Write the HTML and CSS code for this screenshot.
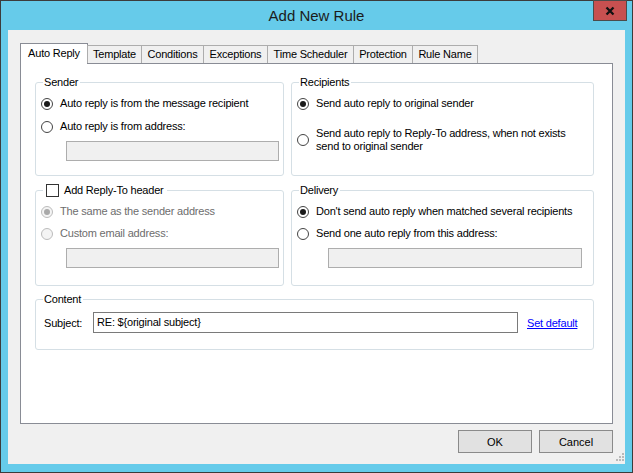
FILE: index.html
```html
<!DOCTYPE html>
<html>
<head>
<meta charset="utf-8">
<title>Add New Rule</title>
<link rel="stylesheet" href="styles.css">
</head>
<body>
<div class="window">
  <div class="titlebar">
    <span class="title">Add New Rule</span>
    <div class="close">
      <svg width="10" height="10" viewBox="0 0 10 10"><path d="M1.5 1.5 L8.5 8.5 M8.5 1.5 L1.5 8.5" stroke="#111" stroke-width="2.3" fill="none"/></svg>
    </div>
  </div>
  <div class="client">
    <div class="tabstrip">
      <div class="tab active w1">Auto Reply</div>
      <div class="tab w2">Template</div>
      <div class="tab w3">Conditions</div>
      <div class="tab w4">Exceptions</div>
      <div class="tab w5">Time Scheduler</div>
      <div class="tab w6">Protection</div>
      <div class="tab w7">Rule Name</div>
    </div>
    <div class="panel">
      <fieldset class="group">
        <legend>Sender</legend>
        <div class="opt first"><span class="radio on"></span><span>Auto reply is from the message recipient</span></div>
        <div class="opt next"><span class="radio"></span><span>Auto reply is from address:</span></div>
        <div class="tb left-tb"></div>
      </fieldset>
      <fieldset class="group">
        <legend>Recipients</legend>
        <div class="opt first"><span class="radio on"></span><span>Send auto reply to original sender</span></div>
        <div class="opt tall"><span class="radio"></span><span class="two">Send auto reply to Reply-To address, when not exists<br>send to original sender</span></div>
      </fieldset>
      <fieldset class="group">
        <legend class="check-legend"><span class="checkbox"></span><span>Add Reply-To header</span></legend>
        <div class="opt first disabled"><span class="radio on"></span><span>The same as the sender address</span></div>
        <div class="opt next2 disabled"><span class="radio"></span><span>Custom email address:</span></div>
        <div class="tb left-tb"></div>
      </fieldset>
      <fieldset class="group">
        <legend>Delivery</legend>
        <div class="opt first"><span class="radio on"></span><span>Don't send auto reply when matched several recipients</span></div>
        <div class="opt next2"><span class="radio"></span><span>Send one auto reply from this address:</span></div>
        <div class="tb right-tb"></div>
      </fieldset>
      <fieldset class="group content">
        <legend>Content</legend>
        <div class="subject-row">
          <span class="subject-label">Subject:</span>
          <div class="subject-tb">RE: ${original subject}</div>
          <span class="link">Set default</span>
        </div>
      </fieldset>
    </div>
    <div class="buttons">
      <div class="btn">OK</div>
      <div class="btn">Cancel</div>
    </div>
    <svg class="grip" width="10" height="10" viewBox="0 0 10 10">
      <rect x="8" y="0" width="2" height="2" fill="#b9b9b9"/>
      <rect x="5" y="3" width="2" height="2" fill="#b9b9b9"/>
      <rect x="8" y="3" width="2" height="2" fill="#b9b9b9"/>
      <rect x="2" y="6" width="2" height="2" fill="#b9b9b9"/>
      <rect x="5" y="6" width="2" height="2" fill="#b9b9b9"/>
      <rect x="8" y="6" width="2" height="2" fill="#b9b9b9"/>
    </svg>
  </div>
</div>
</body>
</html>
```

FILE: styles.css
```css
html, body {
  margin: 0;
  padding: 0;
  background: #ffffff;
}
body {
  font-family: "Liberation Sans", Arial, sans-serif;
  font-size: 11px;
  letter-spacing: -0.2px;
  color: #000;
}
.window {
  width: 633px;
  height: 473px;
  box-sizing: border-box;
  border: 1px solid #3c3c3c;
  background: #66cbea;
  padding: 0 7px 8px;
  display: flex;
  flex-direction: column;
}
.titlebar {
  height: 29px;
  flex: none;
  display: grid;
  grid-template-columns: 1fr auto 1fr;
}
.title {
  grid-column: 2;
  font-size: 15px;
  letter-spacing: 0;
  line-height: 29px;
  color: #1b1b1b;
}
.close {
  grid-column: 3;
  justify-self: end;
  align-self: start;
  width: 34px;
  height: 21px;
  box-sizing: border-box;
  margin-top: -1px;
  margin-right: -2px;
  background: #c75050;
  border: 1px solid #4b4b4b;
  display: flex;
  align-items: center;
  justify-content: center;
  padding-top: 1px;
}
.client {
  position: relative;
  flex: 1;
  background: #f0f0f0;
  padding: 13px 12px 11px;
  display: flex;
  flex-direction: column;
}
.tabstrip {
  display: flex;
  align-items: flex-end;
  height: 20px;
  position: relative;
  z-index: 1;
}
.tab {
  height: 18px;
  box-sizing: border-box;
  border: 1px solid #adadad;
  border-bottom: none;
  background: #f0f0f0;
  text-align: center;
  line-height: 17px;
  margin-left: -1px;
  white-space: nowrap;
}
.tab.active {
  height: 21px;
  margin-bottom: -1px;
  margin-left: 0;
  background: #fff;
  border-color: #898c95;
  line-height: 19px;
}
.w1 { width: 68px; }
.w2 { width: 55px; }
.w3 { width: 63px; }
.w4 { width: 65px; }
.w5 { width: 87px; }
.w6 { width: 60px; }
.w7 { width: 66px; }
.panel {
  height: 361px;
  box-sizing: border-box;
  border: 1px solid #898c95;
  background: #fff;
  padding: 11px 18px 0 14px;
  display: grid;
  grid-template-columns: 249px 303px;
  grid-template-rows: 101px 103px 57px;
  column-gap: 7px;
  row-gap: 7px;
  align-content: start;
}
.group {
  margin: 0;
  padding: 0;
  min-width: 0;
  border: 1px solid #d5dfe5;
  border-radius: 3px;
  box-sizing: border-box;
}
.group legend {
  margin-left: 7px;
  padding: 0 2px 0 1px;
  height: 14px;
  line-height: 14px;
}
.group legend.check-legend {
  display: flex;
  align-items: center;
  gap: 5px;
  padding: 0 3px 0 3px;
}
.checkbox {
  width: 13px;
  height: 13px;
  box-sizing: border-box;
  border: 1px solid #333;
  background: #fff;
}
.content {
  grid-column: 1 / 3;
  margin-top: -1px;
}
.opt {
  display: flex;
  align-items: center;
  gap: 7px;
  height: 13px;
  line-height: 13px;
  padding-left: 5px;
  white-space: nowrap;
}
.opt.first { margin-top: 8px; }
.opt.next { margin-top: 10px; }
.opt.next2 { margin-top: 9px; }
.opt.tall {
  margin-top: 16px;
  height: 27px;
}
.two { line-height: 13px; }
.radio {
  flex: none;
  width: 12px;
  height: 12px;
  box-sizing: border-box;
  border: 1px solid #444;
  border-radius: 50%;
  background: #fff;
  display: flex;
  align-items: center;
  justify-content: center;
}
.radio.on::after {
  content: "";
  width: 6px;
  height: 6px;
  border-radius: 50%;
  background: #1a1a1a;
}
.opt.disabled { color: #6d6d6d; }
.opt.disabled .radio {
  border-color: #bcbcbc;
  background: #f4f4f4;
}
.opt.disabled .radio.on::after { background: #a9a9a9; }
.tb {
  height: 20px;
  box-sizing: border-box;
  border: 1px solid #adadad;
  background: #f0f0f0;
  margin-top: 8px;
}
.left-tb {
  margin-left: 30px;
  width: 213px;
}
.right-tb {
  margin-left: 36px;
  width: 254px;
}
.subject-row {
  display: flex;
  align-items: center;
  padding: 6px 0 0 8px;
}
.subject-label { width: 49px; }
.subject-tb {
  width: 425px;
  height: 21px;
  box-sizing: border-box;
  border: 1px solid #7a7a7a;
  background: #fff;
  padding-left: 3px;
  line-height: 19px;
}
.link {
  margin-left: 9px;
  color: #0000ff;
  text-decoration: underline;
}
.buttons {
  display: flex;
  justify-content: flex-end;
  gap: 7px;
  margin-top: 6px;
}
.btn {
  width: 74px;
  height: 23px;
  box-sizing: border-box;
  border: 1px solid #8a8a8a;
  background: #e1e1e1;
  display: flex;
  align-items: center;
  justify-content: center;
  letter-spacing: 0;
}
.grip {
  position: absolute;
  right: 1px;
  bottom: 1px;
}
```
